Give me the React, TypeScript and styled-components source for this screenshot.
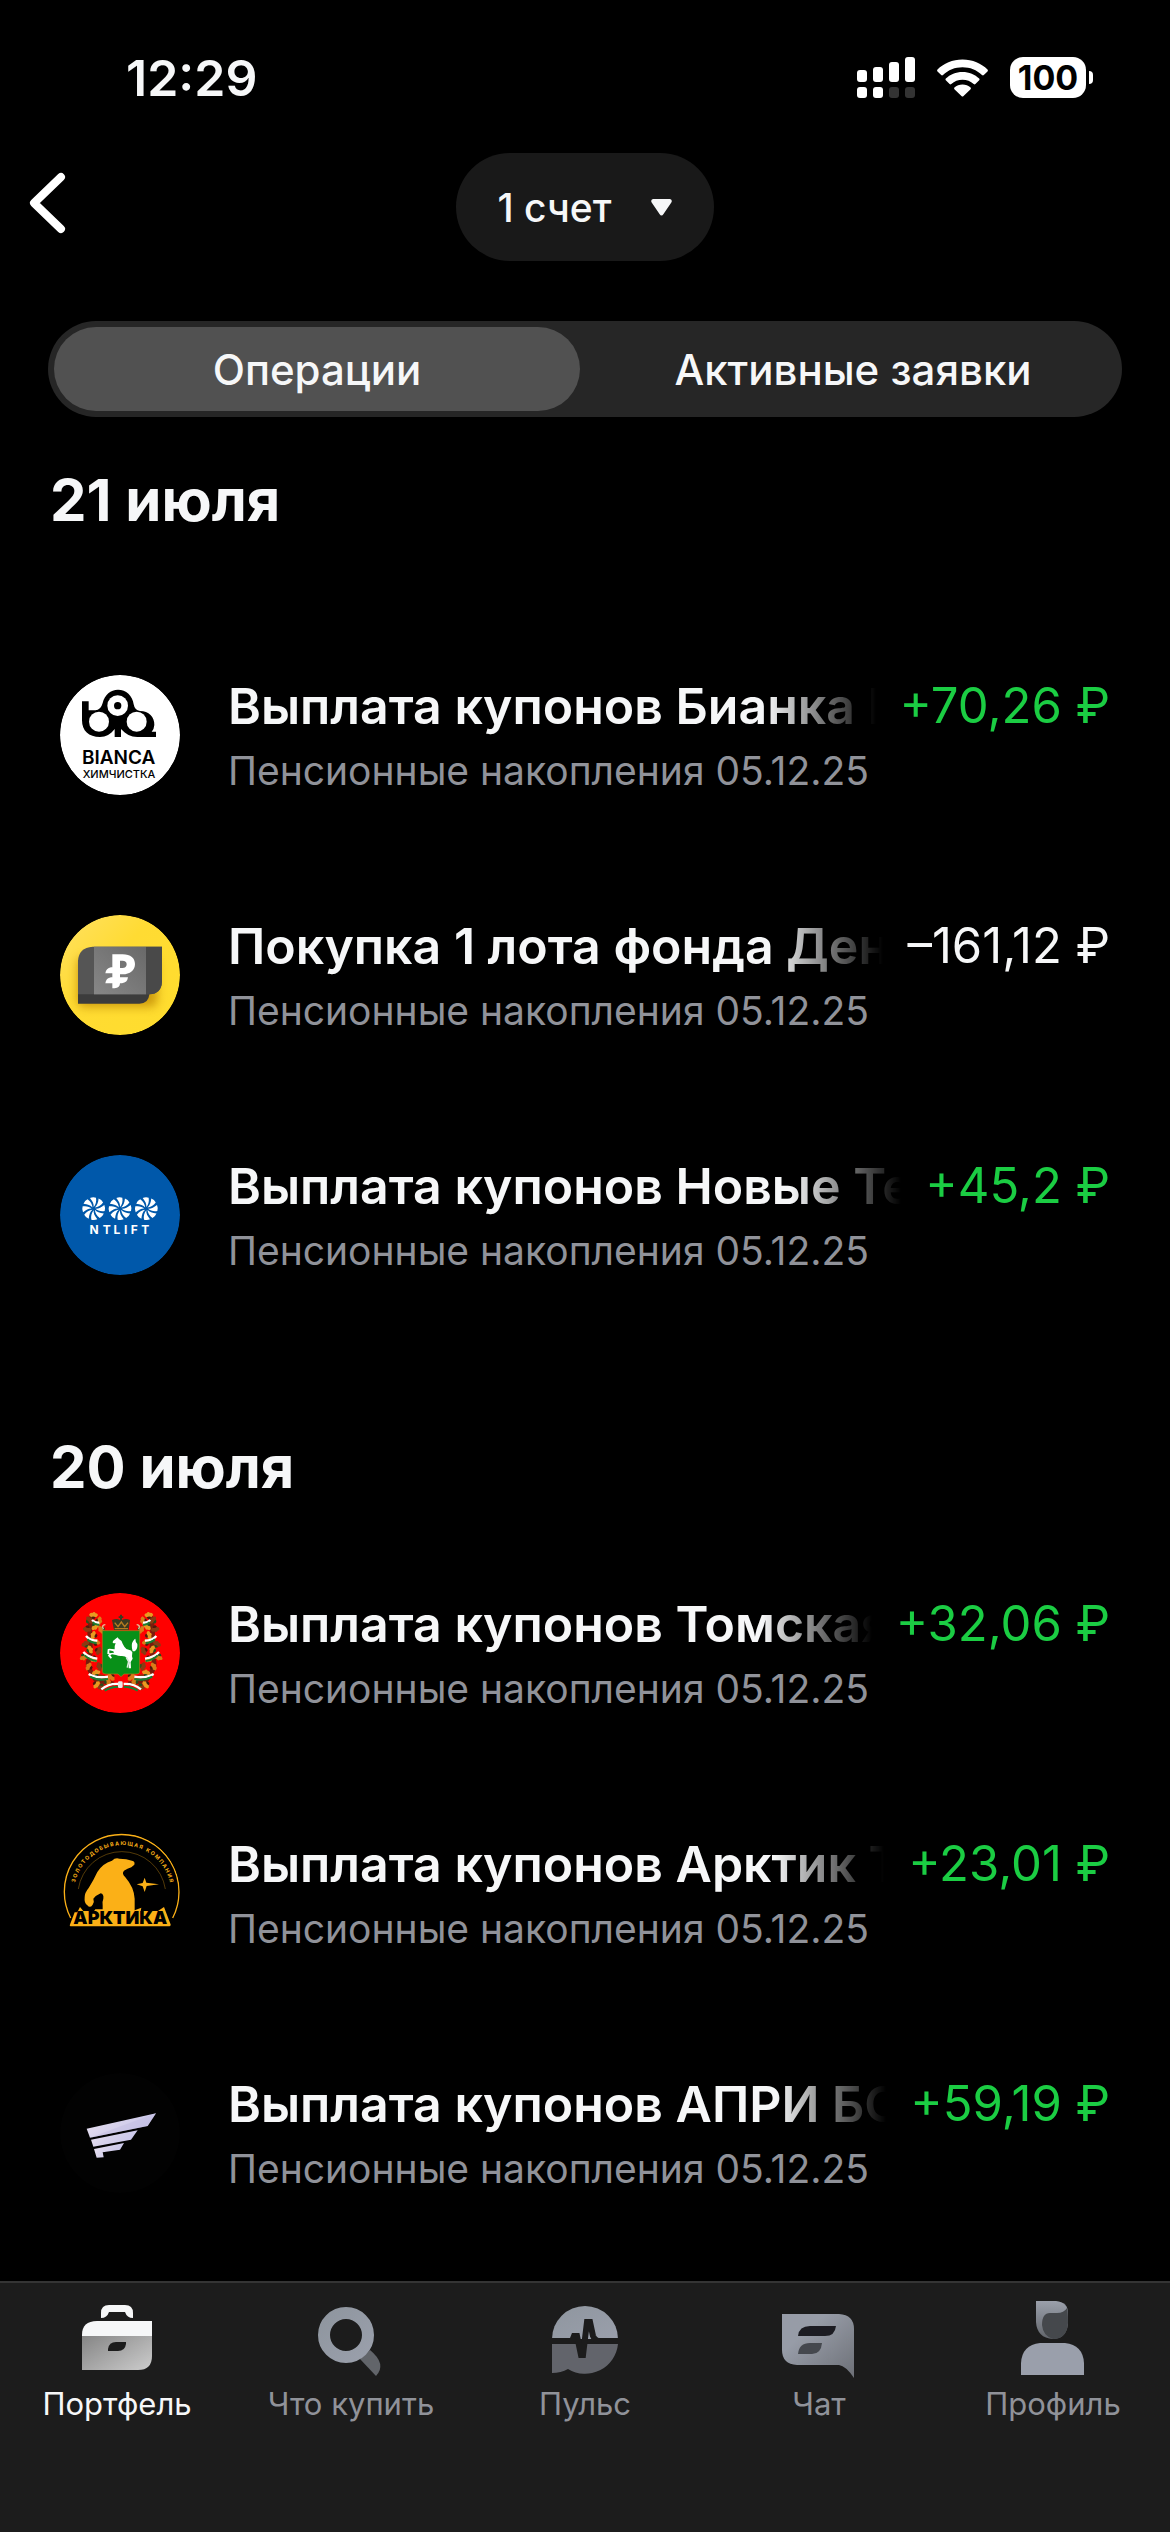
import React, { FunctionComponent, ReactNode, useState } from 'react';
import styled, { createGlobalStyle } from 'styled-components';

const GlobalStyle = createGlobalStyle`
  * {
    box-sizing: border-box;
  }

  body {
    margin: 0;
    background: #000;
    color: #f6f7f8;
    font-family: Inter, 'Liberation Sans', sans-serif;
  }

  button {
    border: 0;
    padding: 0;
    background: none;
    color: inherit;
    font: inherit;
    cursor: pointer;
  }
`;

const Page = styled.div`
  display: flex;
  flex-direction: column;
  min-height: 100vh;
`;

const StatusBar = styled.div`
  display: flex;
  align-items: center;
  justify-content: space-between;
  height: 153px;
  padding: 2px 77px 0 126px;
`;

const Clock = styled.time`
  font-size: 50px;
  font-weight: 600;
  line-height: 60px;
`;

const StatusIcons = styled.div`
  display: flex;
  align-items: center;
  gap: 22px;
`;

const Battery = styled.div`
  display: flex;
  align-items: center;
  gap: 3px;
`;

const BatteryBody = styled.div`
  width: 76px;
  height: 41px;
  border-radius: 13px;
  background: #fff;
  color: #000;
  font-size: 34px;
  font-weight: 700;
  line-height: 41px;
  text-align: center;
`;

const BatteryTip = styled.div`
  width: 4px;
  height: 13px;
  border-radius: 0 4px 4px 0;
  background: #fff;
`;

const Header = styled.header`
  display: grid;
  grid-template-columns: 1fr auto 1fr;
  align-items: center;
  padding: 0 27px;
`;

const BackButton = styled.button`
  display: flex;
  justify-self: start;
  align-self: start;
  padding-top: 18px;
`;

const AccountButton = styled.button`
  display: flex;
  align-items: center;
  gap: 40px;
  height: 108px;
  padding: 0 42px;
  border-radius: 54px;
  background: #191919;
  font-size: 39px;
  font-weight: 500;
`;

const Segments = styled.div`
  display: grid;
  grid-template-columns: 1fr 1fr;
  gap: 10px;
  height: 96px;
  margin: 60px 48px 0;
  padding: 6px;
  border-radius: 48px;
  background: #262626;
`;

const Segment = styled.button<{ $active: boolean }>`
  border-radius: 42px;
  background: ${(p) => (p.$active ? '#515151' : 'transparent')};
  font-size: 42px;
  font-weight: 500;
`;

const Content = styled.main`
  flex: 1;
  padding: 47px 60px 28px 50px;
`;

const Section = styled.section`
  & + & {
    margin-top: 96px;
  }
`;

const DayTitle = styled.h2<{ $gap: number }>`
  margin: 0 0 ${(p) => p.$gap}px;
  font-size: 58px;
  font-weight: 700;
  line-height: 72px;
`;

const List = styled.ul`
  margin: 0;
  padding: 0;
  list-style: none;
`;

const Row = styled.li`
  display: flex;
  gap: 48px;
  padding: 60px 0 60px 10px;
`;

const Avatar = styled.svg`
  flex: none;
  width: 120px;
  height: 120px;
  border-radius: 50%;
`;

const RowText = styled.div`
  flex: 1;
  min-width: 0;
`;

const RowTop = styled.div`
  display: flex;
  gap: 24px;
  margin-bottom: 10px;
  line-height: 62px;
  white-space: nowrap;
`;

const Title = styled.div`
  flex: 1;
  min-width: 0;
  overflow: hidden;
  font-size: 50px;
  font-weight: 600;
  mask-image: linear-gradient(to left, transparent, #000 110px);
`;

const Amount = styled.div<{ $income: boolean }>`
  color: ${(p) => (p.$income ? '#1bcd43' : '#f6f7f8')};
  font-size: 49px;
`;

const Account = styled.div`
  color: #909299;
  font-size: 39px;
  line-height: 48px;
`;

const TabBar = styled.nav`
  position: sticky;
  bottom: 0;
  display: grid;
  grid-template-columns: repeat(5, 1fr);
  height: 251px;
  padding-top: 14px;
  border-top: 2px solid #343434;
  background: #1c1c1c;
`;

const Tab = styled.a<{ $active: boolean }>`
  display: flex;
  flex-direction: column;
  align-items: center;
  gap: 5px;
  color: ${(p) => (p.$active ? '#f6f7f8' : '#909299')};
  font-size: 31px;
  line-height: 36px;
  text-decoration: none;
`;

const SignalIcon = () => (
  <svg width="58" height="41" viewBox="0 0 58 41" fill="#fff">
    <rect x="0" y="13" width="10" height="12" rx="3" />
    <rect x="16" y="10" width="10" height="15" rx="3" />
    <rect x="32" y="5" width="10" height="20" rx="3" />
    <rect x="48" y="0" width="10" height="25" rx="3" />
    <rect x="0" y="30" width="10" height="11" rx="3" />
    <rect x="16" y="30" width="10" height="11" rx="3" />
    <rect x="32" y="30" width="10" height="11" rx="3" fill="#333" />
    <rect x="48" y="30" width="10" height="11" rx="3" fill="#333" />
  </svg>
);

const WifiIcon = () => (
  <svg width="51" height="38" viewBox="0 0 51 38" fill="#fff">
    <path d="M25.500 0.500C35.500 0.500 44.500 4.500 50.500 10.500Q51.300 11.500 50.500 12.400L46.800 16Q46 16.800 45 16C39.700 11 33 8.300 25.500 8.300S11.300 11 6 16Q5 16.800 4.200 16L0.500 12.400Q-0.300 11.500 0.500 10.500C6.500 4.500 15.500 0.500 25.500 0.500Z" />
    <path d="M25.500 13C32 13 38 15.500 42.200 19.600Q43 20.500 42.200 21.300L38.400 25Q37.600 25.800 36.700 25C33.600 22.200 29.800 20.700 25.500 20.700S17.400 22.200 14.300 25Q13.400 25.800 12.600 25L8.800 21.300Q8 20.500 8.800 19.600C13 15.500 19 13 25.500 13Z" />
    <path d="M25.500 25.500C28.500 25.500 31.500 26.700 33.600 28.500Q34.300 29.300 33.600 30.200L26.300 37.200Q25.500 38 24.700 37.200L17.400 30.200Q16.700 29.300 17.400 28.500C19.500 26.700 22.500 25.500 25.500 25.500Z" />
  </svg>
);

const BackIcon = () => (
  <svg width="42" height="64" viewBox="0 0 42 64" fill="none">
    <path
      d="M34 6L7 32L34 58"
      stroke="#fff"
      strokeWidth="8"
      strokeLinecap="round"
      strokeLinejoin="round"
    />
  </svg>
);

const ArrowIcon = () => (
  <svg width="21" height="17" viewBox="0 0 21 17" fill="#f6f7f8">
    <path d="M2 0H19Q22 1 20 4L12.500 15Q10.500 18 8.500 15L1 4Q-1 1 2 0Z" />
  </svg>
);

/* ---------- issuer logos ---------- */

const BiancaLogo = () => (
  <Avatar viewBox="60 44 360 360">
    <circle cx="240" cy="224" r="180" fill="#fff" />
    <path d="M126 123H146V150H166Q182 150 188 128C194 103 212 88 234 88C258 88 278 106 281 132Q284 150 300 152C326 152 344 170 343 194Q342 208 335 214H348V230H292C272 230 258 222 243 206V230H224V206C212 222 198 230 180 230C146 230 126 212 126 180Z" />
    <circle cx="233" cy="136" r="31" fill="#fff" />
    <circle cx="233" cy="136" r="11" />
    <circle cx="177" cy="184" r="30" fill="#fff" />
    <circle cx="290" cy="184" r="30" fill="#fff" />
    <text x="236" y="312" textAnchor="middle" fontFamily="Inter" fontSize="57" fontWeight="600">
      BIANCA
    </text>
    <text x="237" y="353" textAnchor="middle" fontFamily="Inter" fontSize="33" fontWeight="500">
      ХИМЧИСТКА
    </text>
  </Avatar>
);

const MoneyLogo = () => (
  <Avatar viewBox="60 44 360 360">
    <defs>
      <linearGradient id="money-bg" x1="0" y1="0" x2="1" y2="1">
        <stop offset="0" stopColor="#ffe164" />
        <stop offset="0.400" stopColor="#ffdb33" />
        <stop offset="1" stopColor="#ffdd2d" />
      </linearGradient>
      <linearGradient id="money-band" x1="1" y1="0" x2="0" y2="1">
        <stop offset="0" stopColor="#696969" />
        <stop offset="1" stopColor="#878787" />
      </linearGradient>
      <filter id="money-shadow" x="-30%" y="-30%" width="160%" height="180%">
        <feGaussianBlur stdDeviation="14" />
      </filter>
    </defs>
    <circle cx="240" cy="224" r="180" fill="url(#money-bg)" />
    <rect x="112" y="170" width="240" height="150" rx="20" fill="#b98200" opacity="0.700" filter="url(#money-shadow)" />
    <path d="M114 180V310H298Q326 310 328 282V200Z" fill="#3c3c3c" />
    <path d="M158 139H366V244Q364 280 328 282H114V182Q116 142 158 139Z" fill="#555" />
    <path d="M318 139H366V244Q364 280 328 282H318Z" fill="#494949" />
    <rect x="162" y="139" width="156" height="143" fill="url(#money-band)" />
    <path
      d="M217 162H248C272 162 285 174 285 191C285 210 270 222 248 222L240 222V231H264Q262 247 246 249H240Q240 262 224 264H217V249H196Q198 233 213 231H217V219H196Q198 204 213 201H217ZM240 181V203H247Q260 203 260 192Q260 181 247 181Z"
      fill="#fff"
      fillRule="evenodd"
    />
  </Avatar>
);

const Fan = ({ x }: { x: number }) => (
  <g transform={`translate(${x} 205)`} fill="#fff">
    {[0, 45, 90, 135, 180, 225, 270, 315].map((angle) => (
      <path
        key={angle}
        d="M0 -5C1 -14 -3 -22 -11 -32Q-2 -36 7 -33C9 -22 6 -12 0 -5Z"
        transform={`rotate(${angle})`}
      />
    ))}
  </g>
);

const NtliftLogo = () => (
  <Avatar viewBox="60 44 360 360">
    <circle cx="240" cy="224" r="180" fill="#0058aa" />
    <Fan x={161} />
    <Fan x={240} />
    <Fan x={319} />
    <g fill="#fff" fontFamily="Inter" fontSize="36" fontWeight="700" textAnchor="middle">
      {['N', 'T', 'L', 'I', 'F', 'T'].map((letter, i) => (
        <text key={i} x={[162, 200, 231, 257, 283, 316][i]} y="280">
          {letter}
        </text>
      ))}
    </g>
  </Avatar>
);

const leaves = [
  [160, 135], [148, 150], [178, 152], [166, 170], [142, 178], [184, 180], [160, 196], [136, 222],
  [168, 216], [150, 238], [176, 242], [132, 262], [160, 268], [178, 290], [146, 290], [168, 308],
  [186, 322], [204, 334], [170, 344], [186, 352], [214, 322],
];

const LaurelBranch = () => (
  <g>
    <path d="M158 132Q146 170 150 210T146 270T168 330L222 342" stroke="#7a1c0c" strokeWidth="14" fill="none" />
    {leaves.map(([x, y], i) => (
      <g key={i} transform={`translate(${x} ${y}) rotate(${i * 47})`}>
        <path d="M-13 0Q-9 -9 -3 -6Q3 -12 7 -5Q15 -4 13 2Q8 9 2 6Q-5 11 -8 5Z" fill={['#e89a20', '#8a3a12', '#d97c18'][i % 3]} />
        <path d="M-7 6Q0 2 7 7L3 12Q-4 13 -7 6Z" fill={i % 2 ? '#274d1c' : '#4a1a0c'} />
      </g>
    ))}
    <g strokeWidth="7" fill="none">
      <path d="M156 150Q166 160 178 158M138 198Q150 212 172 212M130 246Q144 262 172 266M146 312Q168 326 204 320M184 358Q206 340 236 342" stroke="#fff" />
      <path d="M158 157Q168 166 178 164M142 208Q154 219 170 219M134 256Q148 270 170 273M150 320Q172 333 204 327M194 362Q212 350 236 350" stroke="#188034" strokeWidth="6" />
    </g>
  </g>
);

const TomskLogo = () => (
  <Avatar viewBox="60 69 360 360">
    <circle cx="240" cy="249" r="180" fill="#f00" />
    <LaurelBranch />
    <g transform="translate(487 0) scale(-1 1)">
      <LaurelBranch />
    </g>
    <path d="M190 178Q184 164 196 164M296 178Q302 164 290 164" stroke="#e8c8a0" strokeWidth="4" fill="none" />
    <path d="M222 180L216 150Q230 144 240 150V144H236V139H240V134H246V139H250V144H246V150Q258 144 270 150L266 180Z" fill="#3a3a20" />
    <path d="M224 158L234 170L244 156L254 170L264 158M224 176H264" stroke="#b57a20" strokeWidth="4" fill="none" />
    <path d="M187 182H299V306Q298 312 288 312H252L243 320L234 312H198Q187 312 187 304Z" fill="#089018" stroke="#a8801c" strokeWidth="2" />
    <path
      d="M219 213L227 206L233 202L236 206Q246 211 248 221L253 230Q258 238 266 239Q274 239 277 247L276 259L278 266L272 276L273 295H266L268 277L262 265Q256 258 246 258Q236 259 228 255L216 253L211 256L216 263L212 266L204 257L208 250L222 248L220 244L208 241L208 252L202 252L203 238L208 236L224 238Q222 230 227 219Q222 221 218 218Z"
      fill="#fff"
    />
    <path d="M278 244Q272 224 279 214Q283 206 286 206Q286 216 292 222Q294 238 284 244Z" fill="#fff" />
    <path d="M259 262L266 275L262 293" stroke="#dfeadf" strokeWidth="5" fill="none" />
    <rect x="234" y="334" width="14" height="20" rx="4" fill="#e8e8e8" />
  </Avatar>
);

const ArcticLogo = () => (
  <Avatar viewBox="60 69 360 360">
    <defs>
      <path id="arctic-arc" d="M101 252A145 145 0 0 1 394 252" />
    </defs>
    <path d="M92 324A172 172 0 1 1 398 324" stroke="#fbb017" strokeWidth="4" fill="none" />
    <path d="M115 237A132 132 0 0 1 376 237" stroke="#fbb017" strokeWidth="1" fill="none" />
    <text fill="#fbb017" fontFamily="Inter" fontSize="16" fontWeight="700">
      <textPath href="#arctic-arc" startOffset="50%" textAnchor="middle">
        З О Л О Т О Д О Б Ы В А Ю Щ А Я&#160;&#160; К О М П А Н И Я
      </textPath>
    </text>
    <path
      d="M216 152Q226 142 238 146Q260 146 276 152Q286 154 283 164L274 172Q262 176 252 182Q244 190 256 202Q282 232 284 266V301L304 293L302 304H162L166 298L188 298V286Q186 276 190 266Q192 252 182 250Q168 256 160 266Q164 276 158 284Q150 296 142 286Q132 280 134 262Q134 248 146 234Q160 212 172 186Q188 160 216 152Z"
      fill="#fbb017"
    />
    <path d="M314 203L319 218L357 223L320 228L314 246L308 229L290 223L308 219Z" fill="#fbb017" />
    <path d="M88 349L104 307L112 307L120 291L130 303H354L372 291L394 349Z" fill="#fbb017" />
    <text x="241" y="343" textAnchor="middle" fill="#000" fontFamily="Inter" fontSize="54" fontWeight="900">
      АРКТИКА
    </text>
  </Avatar>
);

const ApriLogo = () => (
  <Avatar viewBox="60 69 360 360">
    <defs>
      <linearGradient id="apri-wing" x1="0" y1="0" x2="1" y2="0.400">
        <stop offset="0" stopColor="#eee6f3" />
        <stop offset="0.450" stopColor="#d9d4ec" />
        <stop offset="1" stopColor="#c9c6ea" />
      </linearGradient>
    </defs>
    <circle cx="240" cy="249" r="180" fill="#020202" />
    <g fill="url(#apri-wing)">
      <path d="M140 236L348 190L323 228L150 263Z" />
      <path d="M153 269L293 241L273 269L160 290Z" />
      <path d="M162 297L252 279L240 299L188 307L191 322L170 323Z" />
    </g>
    <path d="M150 263L260 222L348 190L323 228Z" fill="#bdb9df" opacity="0.400" />
  </Avatar>
);

/* ---------- tab bar icons ---------- */

const TabIcon = ({ children }: { children: ReactNode }) => (
  <svg width="84" height="84" viewBox="0 0 84 84" aria-hidden="true">
    <defs>
      <linearGradient id="tab-light" x1="0" y1="0" x2="1" y2="1">
        <stop offset="0" stopColor="#8f969f" />
        <stop offset="1" stopColor="#9a9fab" />
      </linearGradient>
      <linearGradient id="tab-case" x1="0" y1="0" x2="1" y2="0.800">
        <stop offset="0" stopColor="#858585" />
        <stop offset="1" stopColor="#c6c6c6" />
      </linearGradient>
      <linearGradient id="tab-chat" x1="0" y1="0" x2="1" y2="1">
        <stop offset="0.300" stopColor="#979ca7" />
        <stop offset="1" stopColor="#6d7077" />
      </linearGradient>
      <linearGradient id="tab-head" x1="0" y1="0" x2="0" y2="1">
        <stop offset="0" stopColor="#9ba0ab" />
        <stop offset="1" stopColor="#62656b" />
      </linearGradient>
    </defs>
    {children}
  </svg>
);

const PortfolioIcon = () => (
  <TabIcon>
    <path d="M26 21V16Q26 8 34 8H50Q58 8 58 16V21Q52 21 50 15H34Q32 21 26 21Z" fill="#f6f7f8" />
    <path d="M7 39V38Q7 24 22 24H77V39Z" fill="#f6f7f8" />
    <path d="M7 39H77V59Q77 73 63 73H7Z" fill="url(#tab-case)" />
    <path d="M33 54V52Q34 45 41 45H51V47Q50 54 43 54Z" fill="#1c1c1c" />
  </TabIcon>
);

const SearchIcon = () => (
  <TabIcon>
    <path d="M61 53Q78 67 67 79L51 62Z" fill="#62656a" />
    <circle cx="37" cy="38" r="22" stroke="url(#tab-light)" strokeWidth="12" fill="none" />
  </TabIcon>
);

const PulseIcon = () => (
  <TabIcon>
    <path d="M9 42A33 33 0 0 1 75 42Z" fill="url(#tab-light)" />
    <path d="M9 47H75A33 33 0 0 1 25 72Q18 76 9 76Z" fill="#62646b" />
    <path
      d="M8 44H29L31 39H34L38 58H40L44 25H47L50 39Q52 44 57 44H76"
      stroke="#1c1c1c"
      strokeWidth="6"
      fill="none"
    />
  </TabIcon>
);

const ChatIcon = () => (
  <TabIcon>
    <path d="M5 17H62Q77 18 77 32V81Q69 69 62 68H20Q5 67 5 53Z" fill="url(#tab-chat)" />
    <path d="M21 39Q22 29 33 29H59Q58 39 48 39Z" fill="#1c1c22" />
    <path d="M21 57Q22 46 33 46H45Q44 57 35 57Z" fill="#45484e" />
  </TabIcon>
);

const ProfileIcon = () => (
  <TabIcon>
    <path d="M25 4H45Q57 5 57 16V27Q55 42 42 42Q26 41 25 25Z" fill="url(#tab-head)" />
    <path d="M56 11Q57 13 57 26Q56 42 42 42Q32 39 31 28Q31 16 39 16H46Q53 16 56 11Z" fill="#45484c" />
    <path d="M10 78V66Q11 48 29 46H54Q72 48 73 66V78Z" fill="#9a9fab" />
  </TabIcon>
);

const days = [
  {
    title: '21 июля',
    gap: 79,
    operations: [
      { title: 'Выплата купонов Бианка П', amount: '+70,26 ₽', Logo: BiancaLogo },
      { title: 'Покупка 1 лота фонда Ден', amount: '–161,12 ₽', Logo: MoneyLogo },
      { title: 'Выплата купонов Новые Те', amount: '+45,2 ₽', Logo: NtliftLogo },
    ],
  },
  {
    title: '20 июля',
    gap: 30,
    operations: [
      { title: 'Выплата купонов Томская', amount: '+32,06 ₽', Logo: TomskLogo },
      { title: 'Выплата купонов Арктик Т', amount: '+23,01 ₽', Logo: ArcticLogo },
      { title: 'Выплата купонов АПРИ БО', amount: '+59,19 ₽', Logo: ApriLogo },
    ],
  },
];

const tabs = [
  { name: 'Портфель', Icon: PortfolioIcon },
  { name: 'Что купить', Icon: SearchIcon },
  { name: 'Пульс', Icon: PulseIcon },
  { name: 'Чат', Icon: ChatIcon },
  { name: 'Профиль', Icon: ProfileIcon },
];

const segments = ['Операции', 'Активные заявки'];

const App: FunctionComponent = () => {
  const [segment, setSegment] = useState(0);

  return (
    <Page>
      <GlobalStyle />
      <StatusBar>
        <Clock>12:29</Clock>
        <StatusIcons>
          <SignalIcon />
          <WifiIcon />
          <Battery>
            <BatteryBody>100</BatteryBody>
            <BatteryTip />
          </Battery>
        </StatusIcons>
      </StatusBar>

      <Header>
        <BackButton aria-label="Назад">
          <BackIcon />
        </BackButton>
        <AccountButton>
          1 счет
          <ArrowIcon />
        </AccountButton>
      </Header>

      <Segments role="tablist">
        {segments.map((name, i) => (
          <Segment
            key={name}
            role="tab"
            aria-selected={segment === i}
            $active={segment === i}
            onClick={() => setSegment(i)}
          >
            {name}
          </Segment>
        ))}
      </Segments>

      <Content>
        {days.map((day) => (
          <Section key={day.title}>
            <DayTitle $gap={day.gap}>{day.title}</DayTitle>
            <List>
              {day.operations.map(({ title, amount, Logo }) => (
                <Row key={title}>
                  <Logo />
                  <RowText>
                    <RowTop>
                      <Title>{title}</Title>
                      <Amount $income={amount.startsWith('+')}>{amount}</Amount>
                    </RowTop>
                    <Account>Пенсионные накопления 05.12.25</Account>
                  </RowText>
                </Row>
              ))}
            </List>
          </Section>
        ))}
      </Content>

      <TabBar>
        {tabs.map(({ name, Icon }, i) => (
          <Tab key={name} href="#" $active={i === 0}>
            <Icon />
            {name}
          </Tab>
        ))}
      </TabBar>
    </Page>
  );
};

export default App;
